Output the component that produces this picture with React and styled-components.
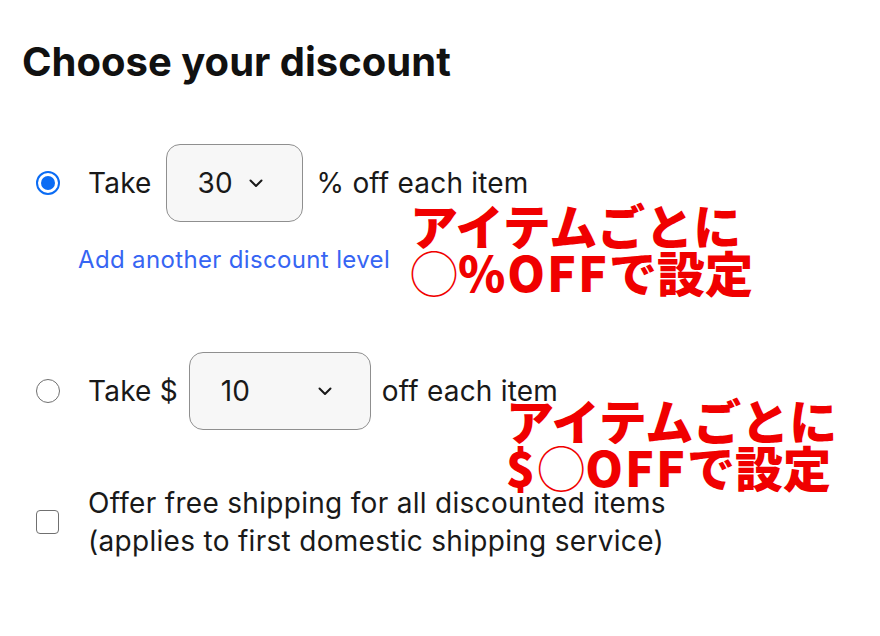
import React from "react";
import styled, { createGlobalStyle } from "styled-components";

const GlobalStyle = createGlobalStyle`
  body {
    margin: 0;
    background: #ffffff;
    font-family: Inter, "Liberation Sans", Arial, sans-serif;
    color: #191919;
  }
`;

const Page = styled.div`
  position: relative;
  width: 880px;
  height: 636px;
  padding: 40px 0 0 22px;
  box-sizing: border-box;
  overflow: hidden;
`;

const Heading = styled.h2`
  margin: 0;
  font-size: 40px;
  line-height: 44px;
  font-weight: 700;
  letter-spacing: 0;
  color: #111111;
`;

const OptionRow = styled.div`
  display: flex;
  align-items: center;
  gap: ${(p) => p.$gap}px;
  margin-top: ${(p) => p.$top}px;
  padding-left: 14px;
`;

const Radio = styled.span`
  width: 24px;
  height: 24px;
  box-sizing: border-box;
  border-radius: 50%;
  border: ${(p) => (p.$checked ? "2px solid #0b6cf4" : "1.5px solid #707070")};
  display: flex;
  align-items: center;
  justify-content: center;
  margin-right: ${(p) => 28 - p.$gap}px;
  flex-shrink: 0;

  &::after {
    content: "";
    display: ${(p) => (p.$checked ? "block" : "none")};
    width: 14px;
    height: 14px;
    border-radius: 50%;
    background: #0b6cf4;
  }
`;

const Label = styled.span`
  font-size: 28px;
  line-height: 32px;
  letter-spacing: 0.2px;
  color: #191919;
`;

const Select = styled.div`
  width: ${(p) => p.$width}px;
  height: 78px;
  box-sizing: border-box;
  border: 1.5px solid #8f8f8f;
  border-radius: 14px;
  background: #f7f7f7;
  display: flex;
  align-items: center;
  justify-content: ${(p) => (p.$spread ? "space-between" : "flex-start")};
  gap: 16px;
  padding: 0 38px 0 31px;
  font-size: 28px;
  color: #191919;
`;

const Chevron = () => (
  <svg width="14" height="9" viewBox="0 0 14 9" fill="none">
    <path d="M1.5 1.5 L7 7 L12.5 1.5" stroke="#191919" strokeWidth="2" strokeLinecap="round" strokeLinejoin="round" />
  </svg>
);

const AddLink = styled.a`
  display: block;
  margin: 25px 0 0 56px;
  font-size: 24px;
  line-height: 26px;
  letter-spacing: 0.35px;
  color: #3665f3;
  text-decoration: none;
`;

const CheckRow = styled.div`
  display: flex;
  align-items: center;
  margin-top: 54px;
  padding-left: 14px;
`;

const Checkbox = styled.span`
  width: 23px;
  height: 24px;
  box-sizing: border-box;
  border: 1.5px solid #707070;
  border-radius: 4px;
  margin-right: 29px;
  flex-shrink: 0;
`;

const CheckText = styled.div`
  font-size: 28px;
  line-height: 38px;
  letter-spacing: 0.3px;
  color: #191919;
`;

const Note = styled.div`
  position: absolute;
  left: ${(p) => p.$left}px;
  top: ${(p) => p.$top}px;
  font-family: "Noto Sans CJK JP", sans-serif;
  font-weight: 900;
  font-size: 48px;
  line-height: 47px;
  color: #f00000;
  white-space: nowrap;
`;

const Latin = styled.span`
  letter-spacing: 2px;
`;

const Circle = styled.span`
  font-weight: 400;
`;

export default function App() {
  return (
    <>
      <GlobalStyle />
      <Page>
        <Heading>Choose your discount</Heading>

        <OptionRow $top={60} $gap={14}>
          <Radio $checked $gap={14} />
          <Label>Take</Label>
          <Select $width={137}>
            30 <Chevron />
          </Select>
          <Label>% off each item</Label>
        </OptionRow>
        <AddLink href="#">Add another discount level</AddLink>

        <OptionRow $top={79} $gap={11}>
          <Radio $gap={11} />
          <Label>Take $</Label>
          <Select $width={182} $spread>
            10 <Chevron />
          </Select>
          <Label>off each item</Label>
        </OptionRow>

        <CheckRow>
          <Checkbox />
          <CheckText>
            Offer free shipping for all discounted items
            <br />
            (applies to first domestic shipping service)
          </CheckText>
        </CheckRow>

        <Note $left={410} $top={201}>
          アイテムごとに
          <br />
          <Circle>◯</Circle>
          <Latin>%OFF</Latin>で設定
        </Note>
        <Note $left={506} $top={396}>
          アイテムごとに
          <br />
          <Latin>$</Latin>
          <Circle>◯</Circle>
          <Latin>OFF</Latin>で設定
        </Note>
      </Page>
    </>
  );
}
